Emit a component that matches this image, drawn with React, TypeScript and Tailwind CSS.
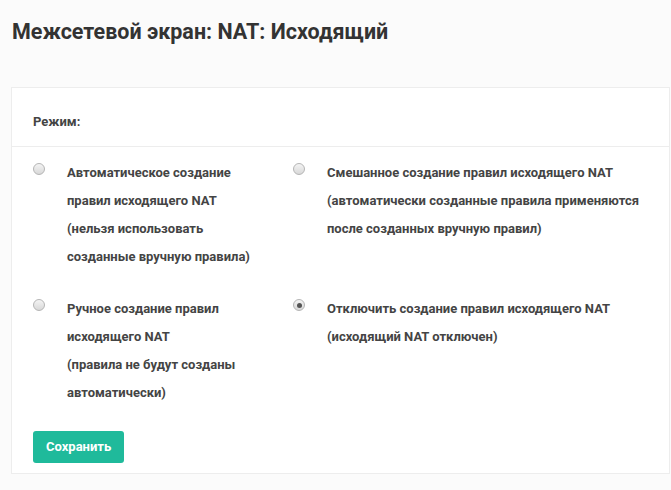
import React from 'react';

type Option = {
  id: string;
  lines: string[];
};

const options: Option[] = [
  { id: 'auto', lines: ['Автоматическое создание', 'правил исходящего NAT', '(нельзя использовать', 'созданные вручную правила)'] },
  { id: 'hybrid', lines: ['Смешанное создание правил исходящего NAT', '(автоматически созданные правила применяются', 'после созданных вручную правил)'] },
  { id: 'manual', lines: ['Ручное создание правил', 'исходящего NAT', '(правила не будут созданы', 'автоматически)'] },
  { id: 'disabled', lines: ['Отключить создание правил исходящего NAT', '(исходящий NAT отключен)'] },
];

const Radio: React.FC<{ checked: boolean }> = ({ checked }) => (
  <span className="mt-[4px] flex h-[12px] w-[12px] shrink-0 items-center justify-center rounded-full border border-[#b5b5b5] bg-gradient-to-b from-[#f4f4f4] to-[#d8d8d8]">
    {checked && <span className="h-[5px] w-[5px] rounded-full bg-[#555]" />}
  </span>
);

export default function App() {
  const selected = 'disabled';
  return (
    <div className="min-h-[490px] w-[671px] bg-[#fbfbfb] font-['Roboto',sans-serif] text-[#444]">
      <h1 className="px-[12px] pt-[18px] text-[21.5px] font-bold leading-[28px] text-[#333]">
        Межсетевой экран: NAT: Исходящий
      </h1>

      <div className="mt-[41px] ml-[11px] w-[659px] border border-[#ededed] bg-white">
        <div className="border-b border-[#ededed] px-[21px] pt-[24px] pb-[14px] text-[13px] font-bold leading-[20px]">
          Режим:
        </div>

        <div className="px-[21px] pt-[12px] pb-[10px]">
          <div className="grid grid-cols-[260px_1fr] gap-y-[24px]">
            {options.map((opt) => (
              <label key={opt.id} className="flex gap-[22px]">
                <Radio checked={opt.id === selected} />
                <span className="text-[13px] font-bold leading-[28px]">
                  {opt.lines.map((l, i) => (
                    <span key={i} className="block whitespace-nowrap">{l}</span>
                  ))}
                </span>
              </label>
            ))}
          </div>

          <button className="mt-[24px] h-[32px] rounded-[3px] bg-[#1fba9b] px-[13px] text-[13px] font-bold text-white">
            Сохранить
          </button>
        </div>
      </div>
    </div>
  );
}
